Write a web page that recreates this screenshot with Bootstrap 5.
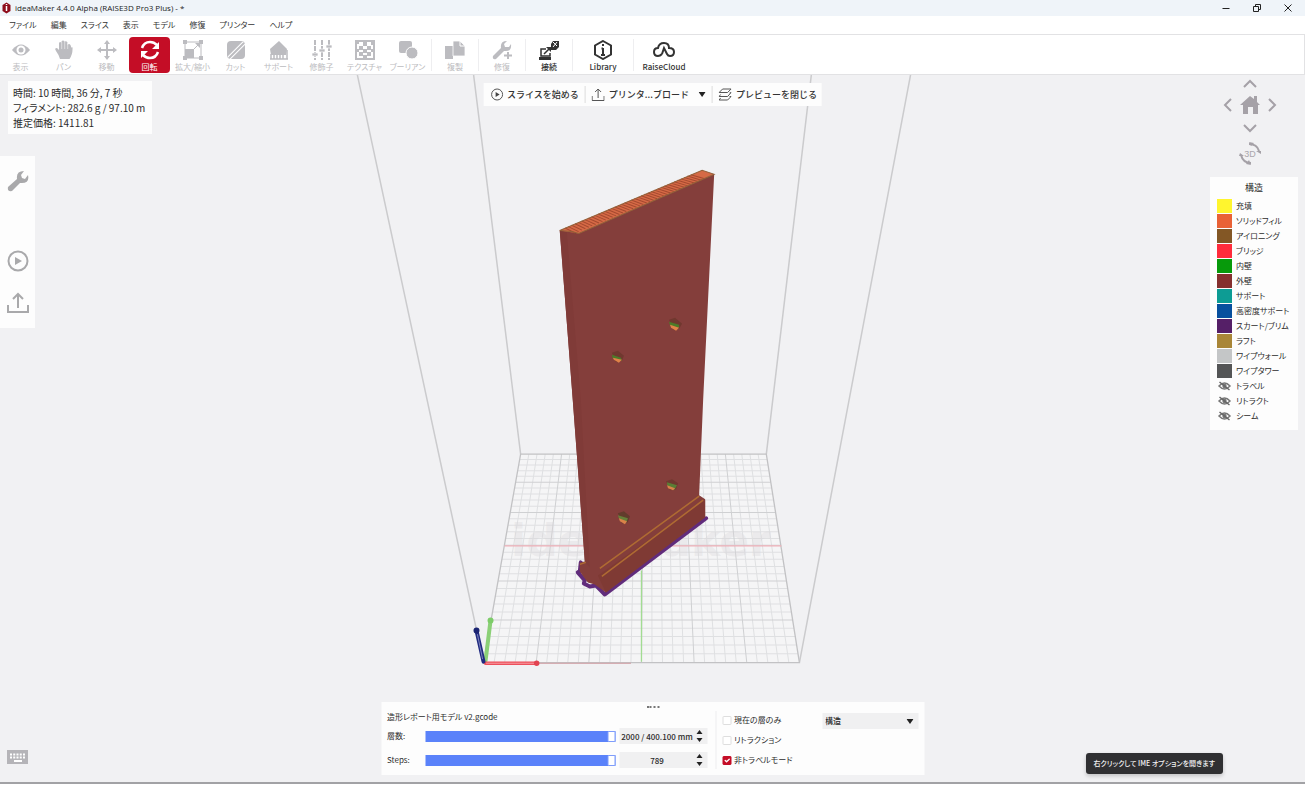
<!DOCTYPE html>
<html lang="ja">
<head>
<meta charset="utf-8">
<meta name="viewport" content="width=device-width, initial-scale=1">
<title>ideaMaker 4.4.0 Alpha</title>
<link href="https://cdn.jsdelivr.net/npm/bootstrap@5.3.0/dist/css/bootstrap.min.css" rel="stylesheet">
<style>
  body { font-family: "Noto Sans CJK JP", sans-serif; font-size: 8px; line-height: 12px; color: #2b2b2b; background: #fff; font-feature-settings: "palt"; }
  button, input, select { font: inherit; font-feature-settings: inherit; color: inherit; }
  svg { display: block; flex: none; }
  .icon { fill: none; stroke: currentColor; stroke-width: 2; }
  .plain { border: 0; background: none; padding: 0; }
  .app { min-height: 100vh; padding: 0 2px 4px 0; }
  .titlebar { height: 16px; padding: 0 13px 0 2px; background: #eff4f9; font: 8px/16px "Open Sans", "Noto Sans", sans-serif; color: #1b1b1b; }
  .titlebar .wins { gap: 23px; }
  .menus { height: 18px; gap: 14px; padding: 0 9px; line-height: 18px; }
  .menus a { color: #333; text-decoration: none; }
  .tools { height: 41px; border: solid #e2e2e4; border-width: 1px 1px 1px 0; background: #fff; }
  .tool-set { gap: 2px; margin-right: 3px; }
  .tool { width: 41px; height: 36px; border: 0; border-radius: 4px; padding: 3px 0 0; background: none; color: #bcbcc0; line-height: 10px; white-space: nowrap; display: flex; flex-direction: column; align-items: center; gap: 2px; }
  .tool.on { background: #c40d26; color: #fff; }
  .tool.live { color: #333; font-weight: 500; }
  .tool.mid { width: 46px; }
  .tool.wide { width: 60px; }
  .rule { width: 1px; height: 32px; background: #eeeef0; }
  .stage { background: #f1f1f3; border-bottom: 2px solid #a2a2a5; }
  .panel { background: #fdfdfd; }
  .info { left: 8px; top: 6px; width: 144px; padding: 4px 5px; font-size: 10px; line-height: 15px; white-space: nowrap; }
  .side { left: 0; top: 81px; width: 35px; height: 172px; padding: 14px 7px; color: #a9a9ab; }
  .actions { top: 8px; height: 23px; font-size: 9px; font-weight: 500; font-feature-settings: normal; color: #333; white-space: nowrap; gap: 6px; padding: 0 5px 0 7px; }
  .actions .rule { height: 17px; background: #ddd; }
  .views { right: 28px; top: 3px; width: 54px; gap: 5px; color: #a5a1a7; }
  .legend { right: 7px; top: 102px; width: 88px; padding: 3px 0 7px 7px; }
  .legend h2 { font-size: 9px; line-height: 15px; margin: 0 7px 3px 0; font-weight: 400; text-align: center; }
  .legend li { height: 15px; gap: 4px; white-space: nowrap; }
  .chip { width: 15px; height: 14px; }
  .player { bottom: 7px; width: 543px; height: 73px; padding: 9px 6px 6px; }
  .player .rows > :last-child { gap: 8px; margin-top: 5px; }
  .field { height: 16px; gap: 4px; }
  .field label { width: 34px; }
  .spin { width: 88px; height: 16px; background: #f0f0f1; padding-right: 2px; }
  .spin input { width: 76px; height: 16px; border: 0; background: none; padding: 0; text-align: center; font-weight: 500; }
  .bar { width: 190px; height: 11px; margin: 0; appearance: none; background: #5a82fa; }
  .bar::-webkit-slider-thumb { appearance: none; width: 8px; height: 11px; background: #fff; border: 1px solid #7f9dfb; border-radius: 1px; }
  .bar::-moz-range-thumb { width: 6px; height: 9px; background: #fff; border: 1px solid #7f9dfb; border-radius: 1px; }
  .checks { gap: 8px; margin-left: 6px; padding-top: 3px; width: 96px; }
  .checks label { gap: 3px; height: 12px; white-space: nowrap; }
  .form-check-input.tick { width: 9px; height: 9px; margin: 0; border: 1px solid #dedede; border-radius: 1px; flex: none; }
  .form-check-input.tick:checked { background-color: #c40d26; border-color: #c40d26; background-size: 9px; }
  .kind { width: 96px; height: 16px; margin-top: 2px; }
  .kind select { width: 100%; height: 16px; border: 0; border-radius: 0; background: #f0f0f1; appearance: none; padding: 0 3px; line-height: 16px; font-weight: 500; }
  .kind svg { right: 5px; top: 6px; pointer-events: none; }
  .grip { top: 4px; left: 265px; width: 13px; border-top: 2px dotted #777; }
  .hint { right: 82px; bottom: 8px; height: 21px; font-size: 7px; line-height: 21px; padding: 0 8px; border-radius: 3px; background: #303032; color: #f2f2f2; font-weight: 500; white-space: nowrap; box-shadow: 0 2px 4px #0003; }
  .keys { left: 7px; bottom: 18px; }
  .mark-text { font: 700 44px "DejaVu Sans", sans-serif; fill: #d8d5d9; fill-opacity: .35; }
</style>
</head>
<body>
<div class="app d-flex flex-column">
  <header class="titlebar d-flex align-items-center">
    <svg width="9" height="12" viewBox="0 0 9 12"><path d="M4.500 0.500L8.500 3v6L4.500 11.500L.5 9V3z" fill="#8e0d1c"/><path d="M4.500 4v5M4.500 2v1" stroke="#fff" stroke-width="1.500"/></svg>
    <span class="flex-grow-1 ps-1">ideaMaker 4.4.0 Alpha (RAISE3D Pro3 Plus) - *</span>
    <div class="wins d-flex">
      <button class="plain" aria-label="最小化"><svg width="8" height="8" viewBox="0 0 8 8" stroke="#222"><path d="M.5 4.500h7"/></svg></button>
      <button class="plain" aria-label="元に戻す"><svg width="8" height="8" viewBox="0 0 8 8" fill="none" stroke="#222"><path d="M.5 2.500h5v5h-5zM2.500 2.500v-2h5v5h-2"/></svg></button>
      <button class="plain" aria-label="閉じる"><svg width="8" height="8" viewBox="0 0 8 8" stroke="#222"><path d="M.5.5l7 7M7.500.5l-7 7"/></svg></button>
    </div>
  </header>
  <nav class="menus d-flex">
    <a href="#">ファイル</a><a href="#">編集</a><a href="#">スライス</a><a href="#">表示</a><a href="#">モデル</a><a href="#">修復</a><a href="#">プリンター</a><a href="#">ヘルプ</a>
  </nav>
  <div class="tools d-flex align-items-center">
    <div class="tool-set d-flex">
      <button class="tool"><svg width="20" height="20" viewBox="0 0 20 20"><path d="M1 10Q10-1 19 10Q10 21 1 10z" fill="currentColor"/><circle cx="10" cy="10" r="4.500" fill="#fff"/><circle cx="10" cy="10" r="2.500" fill="currentColor"/></svg><span>表示</span></button>
      <button class="tool"><svg width="20" height="20" viewBox="0 0 20 20"><path d="M6 19Q5 15 2 11Q0 8 3 8L5 10V3Q6 1 7.500 3V1.500Q9-.5 10.500 1.500V2Q12 .5 13.500 2.500V5Q15 3 16.500 5Q17.500 9 18.500 7Q19 14 15.500 19z" fill="currentColor"/><path d="M7.700 2.500V9M10.700 2V9M13.700 3V9" stroke="#fff" stroke-width=".5"/></svg><span>パン</span></button>
      <button class="tool"><svg width="20" height="20" viewBox="0 0 20 20"><path class="icon" d="M10 2v16M2 10h16"/><path fill="currentColor" d="M10 0l3 4H7zM10 20l3-4H7zM0 10l4-3v6zM20 10l-4-3v6z"/></svg><span>移動</span></button>
      <button class="tool on"><svg width="20" height="20" viewBox="0 0 20 20"><path d="M2 8Q4 2 10 2Q14 2 17 5M18 12Q16 18 10 18Q6 18 3 15" fill="none" stroke="#fff" stroke-width="2.500"/><path d="M19 2v7h-7zM1 18v-7h7z" fill="#fff"/></svg><span>回転</span></button>
      <button class="tool"><svg width="20" height="20" viewBox="0 0 20 20"><path d="M2 2h16v16H2zM11 9l6-6" fill="none" stroke="currentColor"/><path fill="currentColor" d="M2 9h9v9H2zM12 3h5v5zM0 0h4v4H0zM16 0h4v4h-4zM0 16h4v4H0zM16 16h4v4h-4z"/></svg><span>拡大/縮小</span></button>
      <button class="tool"><svg width="20" height="20" viewBox="0 0 20 20"><rect x="1" y="1" width="18" height="18" rx="4" fill="currentColor"/><path d="M3 18L18 3" stroke="#fff" stroke-width="4"/><path d="M3 18L18 3" stroke="currentColor" stroke-width="2"/></svg><span>カット</span></button>
      <button class="tool"><svg width="20" height="20" viewBox="0 0 20 20"><path d="M1 9L10 1l8 8-1 6H2z" fill="currentColor"/><path d="M2 14v5M5 14v5M8 14v5M11 14v5M14 14v5M18 10v9M1 19h18" stroke="currentColor" stroke-width="1.500"/></svg><span>サポート</span></button>
      <button class="tool"><svg width="20" height="20" viewBox="0 0 20 20"><path d="M3 0v20M10 0v20M17 0v20" stroke="currentColor" stroke-width="2" stroke-dasharray="5 1"/><path d="M0 13h6v3H0zM7 9h6v3H7zM14 5h6v3h-6z" fill="currentColor" stroke="#fff" stroke-width=".7"/></svg><span>修飾子</span></button>
      <button class="tool"><svg width="20" height="20" viewBox="0 0 20 20"><rect x="1" y="1" width="18" height="18" fill="none" stroke="currentColor" stroke-width="2"/><path fill="currentColor" d="M1 1h3v3H1zM8 2h4v4H8zM16 2h3v3h-3zM4 6h4v4H4zM12 6h4v4h-4zM8 9h4v4H8zM4 12h4v4H4zM12 12h4v4h-4zM8 15h4v4H8zM1 9h3v3H1zM16 9h3v3h-3z"/></svg><span>テクスチャ</span></button>
      <button class="tool"><svg width="20" height="20" viewBox="0 0 20 20"><rect x="1" y="1" width="13" height="12" rx="2" fill="currentColor"/><circle cx="14" cy="13" r="6" fill="currentColor" stroke="#fff"/></svg><span>ブーリアン</span></button>
    </div>
    <div class="rule"></div>
    <button class="tool mid"><svg width="20" height="20" viewBox="0 0 20 20"><path d="M0 6h8v13H0z" fill="currentColor"/><path d="M8 1h7l5 5v10H8z" fill="currentColor" stroke="#fff" stroke-width=".8"/><path d="M15 1v5h5" fill="none" stroke="#fff"/></svg><span>複製</span></button>
    <div class="rule"></div>
    <button class="tool mid"><svg width="20" height="20" viewBox="0 0 20 20"><path d="M1 16L9 8Q8 1 15 1L12 4l1 3 4 0 2-3Q20 12 12 11L4 19Q0 20 1 16z" fill="currentColor"/><path d="M16 12v7M12 15.500h8" stroke="currentColor" stroke-width="2"/></svg><span>修復</span></button>
    <div class="rule"></div>
    <button class="tool mid live"><svg width="20" height="20" viewBox="0 0 20 20"><path d="M7 9H2v7h9v-3M5 14l6-6" fill="none" stroke="currentColor" stroke-width="1.500"/><path fill="currentColor" d="M7 7h5v5zM0 17h12v3H0zM12 4l2-3h6v6l-3 3h-5z"/><path d="M14 2l4 4M18 2l-4 5" stroke="#fff"/></svg><span>接続</span></button>
    <div class="rule"></div>
    <button class="tool wide live"><svg width="20" height="20" viewBox="0 0 20 20"><path d="M10 1l8 4.500v9L10 19l-8-4.500v-9z" class="icon"/><path d="M10 4v2M10 8v7M8.500 8.500H10M8 15h4" stroke="currentColor" stroke-width="2"/></svg><span>Library</span></button>
    <div class="rule"></div>
    <button class="tool wide live"><svg width="22" height="20" viewBox="0 0 22 20"><path d="M9 14Q7 16 5 16Q1 16 1 12Q1 8 5 8Q6 3 11 3Q16 3 16 8Q21 8 21 12Q21 16 17 16Q15 16 14 14L11 8L9 14" fill="none" stroke="currentColor" stroke-width="2"/></svg><span>RaiseCloud</span></button>
  </div>

  <main class="stage position-relative flex-grow-1 overflow-hidden">
    <svg class="position-absolute w-100 h-100" viewBox="0 76 1305 705" preserveAspectRatio="xMidYMid slice" role="img" aria-label="3D プレビュー">
      <g fill="none" stroke="#cbcbcd" stroke-width="1.500"><path d="M358 75L484 662M474 75L521 454M811 75L766 454M910 75L799 662"/></g>
      <path d="M521 454H766L799 662H484z" fill="#f5f5f6"/>
      <path id="fine" fill="none" stroke="#dfe0e2" stroke-width="1"/>
      <path id="strong" fill="none" stroke="#cfd0d2" stroke-width="1"/>
      <path d="M521 454H766L799 662H484z" fill="none" stroke="#c2c2c4" stroke-width="1.300"/>
      <text x="641" y="556" text-anchor="middle" class="mark-text">ideaMaker</text>
      <path d="M505 545.500H781" stroke="#efb0b8" stroke-width="1.300"/>
      <path d="M641.500 570V661" stroke="#a2dc92" stroke-width="1.300"/>
      <path d="M538 662.500H631" stroke="#cf9aa0"/>
      <path d="M581 562l-1 9-2 1 7 8-1 3 6 3 6-1 9 9 101-76" fill="none" stroke="#612c7c" stroke-width="4" stroke-linejoin="round" stroke-linecap="round"/>
      <path d="M560 231L714 175L703 400L699 495L705 499V517L606 592L595 584L588 582L580 571V562L585 561L573 400z" fill="#843e3b"/>
      <path d="M560 231L567 232L581 400L590 567L585 561L573 400z" fill="#803b38"/>
      <path d="M598 575L705 500V517L606 592z" fill="#7f3a34"/>
      <path d="M560 231L702 171L714 175L579 234z" fill="#d56a46"/>
      <g id="weave" stroke="#a5492f" stroke-width="1"></g>
      <path d="M560 231L702 171L714 175L579 234L572 232z" fill="none" stroke="#93613a"/>
      <path d="M600 568L699 496M602 576L703 500M580 564l6-2" stroke="#af6b32" stroke-width="1.500"/>
      <g>
        <g transform="translate(618 356)"><path d="M-6-3L0-5 6 0 4 5-2 6z" fill="#70382f"/><path d="M-6-1L3 2 4 5-5 3z" fill="#4c7b28"/><path d="M-5 2L4 4 1 7-4 4z" fill="#e08348"/></g>
        <g transform="translate(675 324)"><path d="M-6-4L0-6 7 0 4 5-2 6z" fill="#70382f"/><path d="M-6-2L4 1 4 4-5 2z" fill="#4c7b28"/><path d="M-5 1L4 4 1 7-4 4z" fill="#e08348"/></g>
        <g transform="translate(624 517)"><path d="M-6-4L0-6 6-1 4 5-2 6z" fill="#623c2c"/><path d="M-6-2L4 1 2 6-5 1z" fill="#668039"/><path d="M-5 1L3 4 1 7-4 4z" fill="#d98249"/></g>
        <g transform="translate(672 484)"><path d="M-6-3L0-5 6-1 4 5-2 6z" fill="#70382f"/><path d="M-5-2L5 1 2 6-5 1z" fill="#5a7d35"/><path d="M-5 1L3 4 1 6-4 4z" fill="#d98249"/></g>
      </g>
      <g stroke-linecap="round" fill="none">
        <path d="M486 660L491 620" stroke="#8bd077" stroke-width="4"/><circle cx="491" cy="620" r="1.500" stroke="#7dcc69" stroke-width="3"/>
        <path d="M486 662.500H537" stroke="#ed4f5b" stroke-width="3.500"/><path d="M487 662.500H534" stroke="#f79aa0"/><circle cx="537" cy="662.500" r="1.500" stroke="#e24350" stroke-width="2.500"/>
        <path d="M484 661L477 630" stroke="#202a80" stroke-width="4"/><path d="M483 658L478 634" stroke="#7c84bb"/><circle cx="477" cy="630" r="1.500" stroke="#1b2472" stroke-width="3"/>
      </g>
    </svg>

    <section class="info panel position-absolute"><div>時間: 10 時間, 36 分, 7 秒</div><div>フィラメント: 282.6 g / 97.10 m</div><div>推定価格: 1411.81</div></section>

    <aside class="side panel position-absolute d-flex flex-column">
      <button class="plain mb-auto" aria-label="設定"><svg width="22" height="22" viewBox="0 0 22 22"><path d="M1 17L10 9Q9 1 17 1L14 5l1 3 3 1 3-4Q23 14 13 13L5 21Q0 22 1 17z" fill="currentColor"/></svg></button>
      <button class="plain mb-3" aria-label="スライス"><svg class="icon" width="22" height="22" viewBox="0 0 22 22"><circle cx="11" cy="11" r="9.500"/><path d="M8 7v8l7-4z" fill="currentColor" stroke="none"/></svg></button>
      <button class="plain mt-1" aria-label="書き出し"><svg class="icon" width="22" height="22" viewBox="0 0 22 22"><path d="M1 13v7h20v-7M11 16V2M6 7l5-5 5 5"/></svg></button>
    </aside>

    <div class="actions panel position-absolute start-50 translate-middle-x d-flex align-items-center">
      <button class="plain d-flex align-items-center gap-1"><svg width="13" height="13" viewBox="0 0 13 13"><circle cx="6.500" cy="6.500" r="5.500" fill="none" stroke="#555"/><path d="M5 4v5l4-2.500z" fill="#444"/></svg>スライスを始める</button>
      <div class="rule"></div>
      <button class="plain d-flex align-items-center gap-1"><svg width="13" height="13" viewBox="0 0 13 13" fill="none" stroke="#555"><path d="M.5 8v4.500h12V8M6.500 10V1M3.500 4l3-3 3 3"/></svg>プリンタ...ブロード</button>
      <button class="plain ms-1" aria-label="その他"><svg width="7" height="5" viewBox="0 0 7 5"><path d="M0 0h7L3.500 5z" fill="#222"/></svg></button>
      <div class="rule"></div>
      <button class="plain d-flex align-items-center gap-1"><svg width="13" height="13" viewBox="0 0 13 13" fill="none" stroke="#555"><path d="M4 1h8.500L9 4.500H.5zM11 5l1.500-.5L9 8.500H.5L2 6.500M11 8.500h1.500L9 12H.5L2 10"/></svg>プレビューを閉じる</button>
    </div>

    <div class="views position-absolute d-flex flex-column align-items-center">
      <button class="plain" aria-label="上"><svg class="icon" width="14" height="11" viewBox="0 0 14 11"><path d="M1 9l6-6 6 6"/></svg></button>
      <div class="d-flex w-100 justify-content-between align-items-center">
        <button class="plain" aria-label="左"><svg class="icon" width="10" height="14" viewBox="0 0 10 14"><path d="M8 1L2 7l6 6"/></svg></button>
        <button class="plain" aria-label="ホーム"><svg width="20" height="22" viewBox="0 0 20 22"><path d="M0 11L10 2l4 3V2h3v6l3 3h-2v9h-5v-7H8v7H3v-9z" fill="currentColor"/></svg></button>
        <button class="plain" aria-label="右"><svg class="icon" width="10" height="14" viewBox="0 0 10 14"><path d="M2 1l6 6-6 6"/></svg></button>
      </div>
      <button class="plain" aria-label="下"><svg class="icon" width="14" height="14" viewBox="0 0 14 14"><path d="M1 4l6 6 6-6"/></svg></button>
      <button class="plain" aria-label="3D"><svg width="24" height="26" viewBox="0 0 24 26"><path d="M11 4Q19 4 21 11M13 23Q5 23 3 15" fill="none" stroke="currentColor" stroke-width="2"/><path d="M18 11h5v3zM1 16l1-3 4 3zM13 25l-5-1 3-4zM11 2l5 1-3 3z" fill="currentColor"/><text x="12" y="17" text-anchor="middle" font-size="9" font-family="Liberation Sans, sans-serif" fill="#aaa6ac">3D</text></svg></button>
    </div>

    <section class="legend panel position-absolute"><h2>構造</h2><ul class="list-unstyled m-0" id="legend"></ul></section>

    <button class="keys plain position-absolute" aria-label="キーボード"><svg width="21" height="14" viewBox="0 0 21 14"><rect width="21" height="14" fill="#b5b4b8"/><path d="M3 4.500h15M3 7.500h15" stroke="#fff" stroke-width="2" stroke-dasharray="2 1.250"/><path d="M7 11h8" stroke="#fff" stroke-width="2"/></svg></button>

    <section class="player panel position-absolute start-50 translate-middle-x d-flex">
      <div class="grip position-absolute"></div>
      <div class="rows d-flex flex-column">
        <div>造形レポート用モデル v2.gcode</div>
        <div class="d-flex flex-column">
          <div class="field d-flex align-items-center"><label for="layer">層数:</label><input id="layer" class="bar" type="range" max="2000" value="2000">
            <div class="spin d-flex align-items-center"><input aria-label="層の値" value="2000 / 400.100 mm"><svg width="8" height="12" viewBox="0 0 8 12"><path d="M1 4l3-4 3 4zM1 8l3 4 3-4z" fill="#222"/></svg></div></div>
          <div class="field d-flex align-items-center"><label for="steps">Steps:</label><input id="steps" class="bar" type="range" max="789" value="789">
            <div class="spin d-flex align-items-center"><input aria-label="ステップの値" value="789"><svg width="8" height="12" viewBox="0 0 8 12"><path d="M1 4l3-4 3 4zM1 8l3 4 3-4z" fill="#222"/></svg></div></div>
        </div>
      </div>
      <div class="rule h-100 ms-2"></div>
      <div class="checks d-flex flex-column">
        <label class="d-flex align-items-center"><input class="form-check-input tick" type="checkbox">現在の層のみ</label>
        <label class="d-flex align-items-center"><input class="form-check-input tick" type="checkbox">リトラクション</label>
        <label class="d-flex align-items-center"><input class="form-check-input tick" type="checkbox" checked>非トラベルモード</label>
      </div>
      <div class="kind position-relative ms-auto"><select aria-label="表示の種類"><option>構造</option></select><svg class="position-absolute" width="7" height="5" viewBox="0 0 7 5"><path d="M0 0h7L3.500 5z" fill="#222"/></svg></div>
    </section>

    <div class="hint position-absolute" role="tooltip">右クリックして IME オプションを開きます</div>
  </main>
</div>
<script src="https://cdn.jsdelivr.net/npm/bootstrap@5.3.0/dist/js/bootstrap.bundle.min.js"></script>
<script>
  // Build plate: 30 x 30 cells in perspective, row width grows as 1/depth
  let fine = '', strong = '';
  for (let i = 1; i < 30; i++) {
    const w = 1 / (1 / 245 + (1 / 315 - 1 / 245) * i / 30);
    const t = (w - 245) / 70;
    const row = `M${521 - 37 * t} ${454 + 208 * t}H${766 + 33 * t}`;
    if (i % 5 === 0) strong += row; else fine += row;
    const col = `M${521 + 245 * i / 30} 454L${484 + 315 * i / 30} 662`;
    if (i % 5 === 0) strong += col; else fine += col;
  }
  document.getElementById('fine').setAttribute('d', fine);
  document.getElementById('strong').setAttribute('d', strong);

  // Infill strokes across the top face, turning from steep to flat
  let weave = '';
  for (let i = 1; i < 40; i++) {
    const t = i / 40;
    weave += `<path d="M${562 + 132 * t} ${230 - 56 * t}L${572 + 136 * t} ${235 - 57 * t}"/>`;
  }
  document.getElementById('weave').innerHTML = weave;

  const kinds = [['充填', '#fff52e'], ['ソリッドフィル', '#e96236'], ['アイロニング', '#835725'], ['ブリッジ', '#ff2c3c'], ['内壁', '#079a0b'], ['外壁', '#85302f'], ['サポート', '#0d9c94'], ['高密度サポート', '#07509e'], ['スカート/ブリム', '#551f67'], ['ラフト', '#a98637'], ['ワイプウォール', '#c4c6c7'], ['ワイプタワー', '#545556'], ['トラベル'], ['リトラクト'], ['シーム']];
  const eye = '<svg width="15" height="14" viewBox="0 0 15 14"><path d="M2 7Q7.500 1 13 7Q7.500 13 2 7z" fill="none" stroke="#777" stroke-width="1.500"/><circle cx="7.500" cy="7" r="2.200" fill="#777"/><path d="M2.500 3l10 8" stroke="#666" stroke-width="1.500"/></svg>';
  document.getElementById('legend').innerHTML = kinds.map(([name, color]) =>
    `<li class="d-flex align-items-center">${color ? `<span class="chip" style="background:${color}"></span>` : eye}<span>${name}</span></li>`).join('');
</script>
</body>
</html>
